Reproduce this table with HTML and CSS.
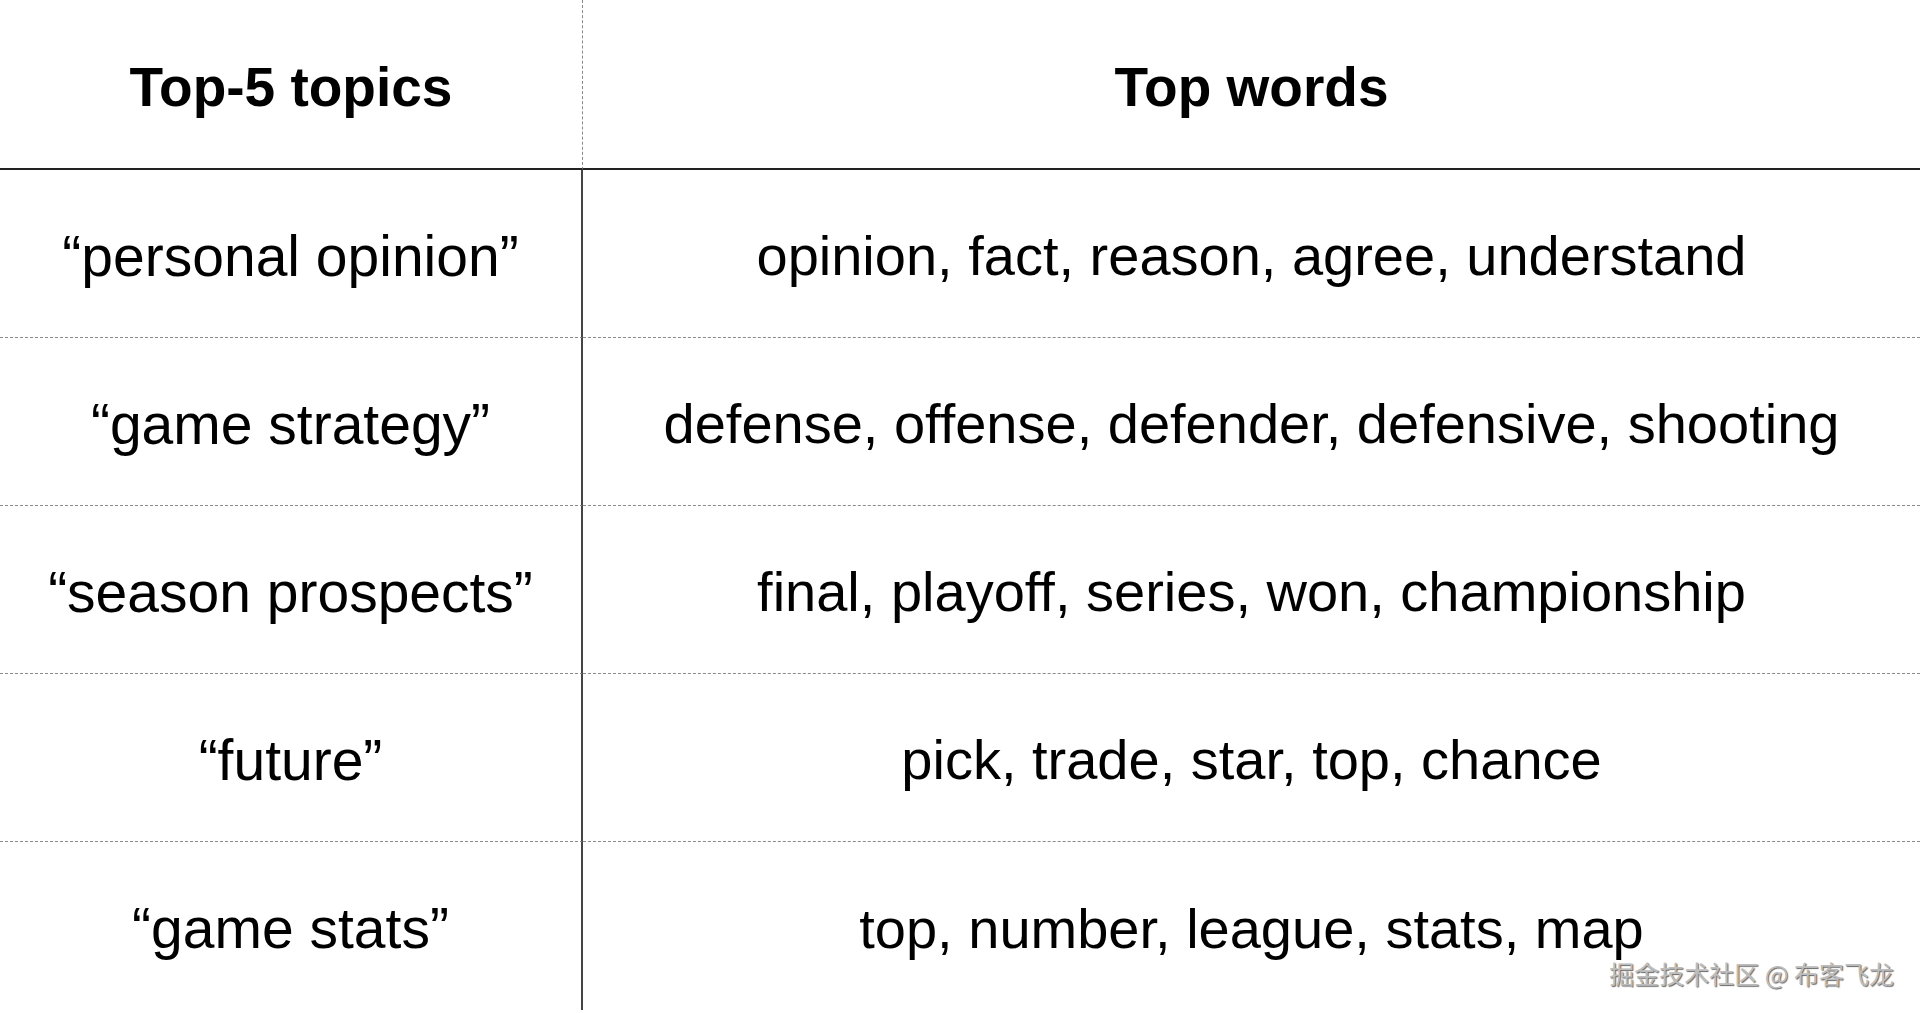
FILE: index.html
```html
<!DOCTYPE html>
<html>
<head>
<meta charset="utf-8">
<link rel="stylesheet" href="styles.css">
</head>
<body>
<div class="table">
  <div class="cell head left">Top-5 topics</div>
  <div class="cell head right">Top words</div>

  <div class="cell left">“personal opinion”</div>
  <div class="cell right">opinion, fact, reason, agree, understand</div>

  <div class="cell left">“game strategy”</div>
  <div class="cell right">defense, offense, defender, defensive, shooting</div>

  <div class="cell left">“season prospects”</div>
  <div class="cell right">final, playoff, series, won, championship</div>

  <div class="cell left">“future”</div>
  <div class="cell right">pick, trade, star, top, chance</div>

  <div class="cell left last">“game stats”</div>
  <div class="cell right last">top, number, league, stats, map</div>
</div>
<div class="watermark">掘金技术社区 @ 布客飞龙</div>
</body>
</html>
```

FILE: styles.css
```css
html, body {
  margin: 0;
  padding: 0;
  background: #fff;
  width: 1920px;
  height: 1013px;
  overflow: hidden;
}
body {
  font-family: "Liberation Sans", Arial, "Noto Sans CJK SC", sans-serif;
  color: #000;
  position: relative;
}
.table {
  display: grid;
  grid-template-columns: 583px 1fr;
  grid-template-rows: 170px;
  grid-auto-rows: 168px;
}
.cell {
  box-sizing: border-box;
  display: flex;
  align-items: center;
  justify-content: center;
  font-size: 56px;
  border-bottom: 1px dashed #8a8a8a;
  padding-top: 4px;
}
.cell.left {
  font-size: 57px;
  border-right: 2px solid #444;
}
.cell.head {
  font-weight: bold;
  font-size: 55px;
  border-bottom: 2px solid #222;
  padding-top: 6px;
}
.cell.head.left {
  border-right: 1px dashed #888;
}
.cell.last {
  border-bottom: none;
}
.watermark {
  position: absolute;
  right: 26px;
  top: 955px;
  font-family: "Noto Sans CJK SC", sans-serif;
  font-size: 25px;
  color: #bdbdbd;
  text-shadow: 1px 1px 1px #666;
}
```
